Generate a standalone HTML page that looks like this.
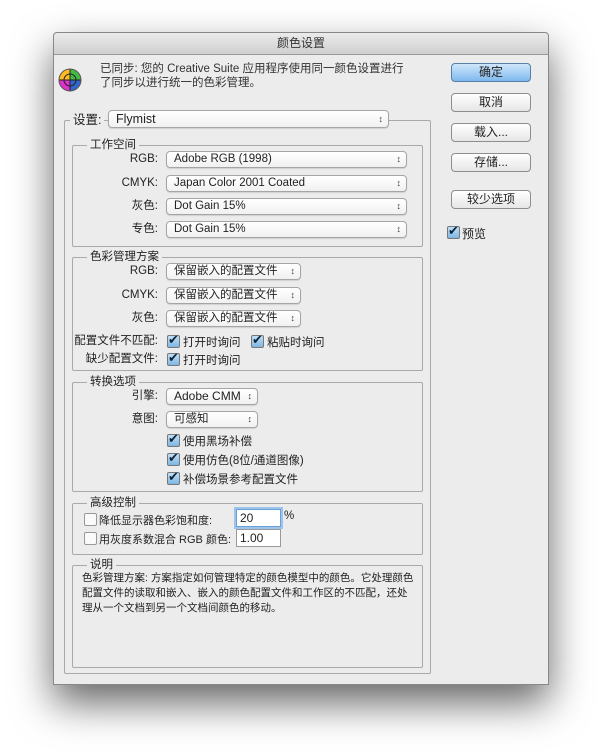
<!DOCTYPE html>
<html><head><meta charset="utf-8"><style>
body{margin:0;width:600px;height:756px;background:#fff;position:relative;overflow:hidden;font-family:"Liberation Sans","Noto Sans CJK SC",sans-serif;font-size:11.5px;color:#222}
.a{position:absolute}
.win{left:53px;top:32px;width:494px;height:651px;background:#ececec;border:1px solid #888;box-shadow:0 18px 40px rgba(0,0,0,.6);border-radius:4px 4px 0 0}
.title{left:0;top:0;width:494px;height:21px;background:linear-gradient(#ebebeb,#cfcfcf);border-bottom:1px solid #999;text-align:center;line-height:21px;font-size:12px;color:#333;border-radius:4px 4px 0 0}
.grp{border:1px solid #a9a9a9;border-radius:2px}
.gl{background:#ececec;padding:0 3px;font-size:11.5px;line-height:12px}
.pop{background:linear-gradient(#fff,#f1f1f1);border:1px solid #a5a5a5;border-radius:4px;height:15px;line-height:15px;padding-left:7px;box-sizing:content-box;font-size:11.5px;box-shadow:0 1px 1px rgba(0,0,0,.12)}
.pop:after{content:"\2195";position:absolute;right:5px;top:0;font-size:9px;color:#333}
.lbl{text-align:right;width:100px;line-height:16px}
.cb{width:11px;height:11px;border:1px solid #777;border-radius:2px;background:linear-gradient(#bfe0f7,#7eb6e3)}
.cb:after{content:"\2714";position:absolute;left:0px;top:-4px;font-size:13px;color:#123}
.cbe{width:11px;height:11px;border:1px solid #999;border-radius:2px;background:#fafafa}
.btn{width:78px;height:17px;border:1px solid #8e8e8e;border-radius:4px;background:linear-gradient(#fff,#e6e6e6);text-align:center;line-height:17px;font-size:12px}
.inp{background:#fff;border:1px solid #999;height:16px;line-height:16px;padding-left:3px;font-size:12px}
</style></head><body>
<div class="a win">
<div class="a title">颜色设置</div>
</div>
<svg class="a" style="left:57px;top:67px" width="26" height="26" viewBox="0 0 26 26">
<circle cx="13" cy="13" r="11" fill="#e33"/>
<path d="M13 13V2A11 11 0 0 1 24 13Z" fill="#4b4"/>
<path d="M13 13H24A11 11 0 0 1 13 24Z" fill="#36c"/>
<path d="M13 13V24A11 11 0 0 1 2 13Z" fill="#d3c"/>
<path d="M13 13H2A11 11 0 0 1 13 2Z" fill="#fb2"/>
<circle cx="13" cy="13" r="6" fill="none" stroke="#222" stroke-width="1"/>
<line x1="2" y1="13" x2="24" y2="13" stroke="#222"/><line x1="13" y1="2" x2="13" y2="24" stroke="#222"/>
<circle cx="13" cy="13" r="11" fill="none" stroke="#555"/>
</svg>
<div class="a" style="left:100px;top:62px;line-height:14px;font-size:11.5px;color:#333">已同步: 您的 Creative Suite 应用程序使用同一颜色设置进行<br>了同步以进行统一的色彩管理。</div>

<div class="a btn" style="left:451px;top:63px;background:linear-gradient(#cfe6fb,#7fb9ee);border-color:#5a7fa8">确定</div>
<div class="a btn" style="left:451px;top:93px">取消</div>
<div class="a btn" style="left:451px;top:123px">载入...</div>
<div class="a btn" style="left:451px;top:153px">存储...</div>
<div class="a btn" style="left:451px;top:190px">较少选项</div>
<div class="a cb" style="left:447px;top:226px"></div><div class="a" style="left:462px;top:225px;font-size:12px">预览</div>

<div class="a grp" style="left:64px;top:120px;width:365px;height:552px"></div>
<div class="a gl" style="left:70px;top:112px;font-size:12.5px;line-height:16px">设置:</div>
<div class="a pop" style="left:108px;top:110px;width:272px;height:16px;font-size:12.5px;line-height:16px">Flymist</div>

<div class="a grp" style="left:72px;top:145px;width:349px;height:100px"></div>
<div class="a gl" style="left:87px;top:139px">工作空间</div>
<div class="a lbl" style="left:58px;top:151px">RGB:</div><div class="a pop" style="left:166px;top:151px;width:232px">Adobe RGB (1998)</div>
<div class="a lbl" style="left:58px;top:175px">CMYK:</div><div class="a pop" style="left:166px;top:175px;width:232px">Japan Color 2001 Coated</div>
<div class="a lbl" style="left:58px;top:198px">灰色:</div><div class="a pop" style="left:166px;top:198px;width:232px">Dot Gain 15%</div>
<div class="a lbl" style="left:58px;top:221px">专色:</div><div class="a pop" style="left:166px;top:221px;width:232px">Dot Gain 15%</div>

<div class="a grp" style="left:72px;top:257px;width:349px;height:112px"></div>
<div class="a gl" style="left:87px;top:251px">色彩管理方案</div>
<div class="a lbl" style="left:58px;top:263px">RGB:</div><div class="a pop" style="left:166px;top:263px;width:126px">保留嵌入的配置文件</div>
<div class="a lbl" style="left:58px;top:287px">CMYK:</div><div class="a pop" style="left:166px;top:287px;width:126px">保留嵌入的配置文件</div>
<div class="a lbl" style="left:58px;top:310px">灰色:</div><div class="a pop" style="left:166px;top:310px;width:126px">保留嵌入的配置文件</div>
<div class="a lbl" style="left:58px;top:333px">配置文件不匹配:</div>
<div class="a cb" style="left:167px;top:335px"></div><div class="a" style="left:183px;top:334px">打开时询问</div>
<div class="a cb" style="left:251px;top:335px"></div><div class="a" style="left:267px;top:334px">粘贴时询问</div>
<div class="a lbl" style="left:58px;top:351px">缺少配置文件:</div>
<div class="a cb" style="left:167px;top:353px"></div><div class="a" style="left:183px;top:352px">打开时询问</div>

<div class="a grp" style="left:72px;top:382px;width:349px;height:108px"></div>
<div class="a gl" style="left:87px;top:376px">转换选项</div>
<div class="a lbl" style="left:58px;top:388px">引擎:</div><div class="a pop" style="left:166px;top:388px;width:83px;font-size:12px">Adobe CMM</div>
<div class="a lbl" style="left:58px;top:411px">意图:</div><div class="a pop" style="left:166px;top:411px;width:83px">可感知</div>
<div class="a cb" style="left:167px;top:434px"></div><div class="a" style="left:183px;top:433px">使用黑场补偿</div>
<div class="a cb" style="left:167px;top:453px"></div><div class="a" style="left:183px;top:452px">使用仿色(8位/通道图像)</div>
<div class="a cb" style="left:167px;top:472px"></div><div class="a" style="left:183px;top:471px">补偿场景参考配置文件</div>

<div class="a grp" style="left:72px;top:503px;width:349px;height:50px"></div>
<div class="a gl" style="left:87px;top:497px">高级控制</div>
<div class="a cbe" style="left:84px;top:513px"></div><div class="a" style="left:99px;top:512px;font-size:11px">降低显示器色彩饱和度:</div>
<div class="a inp" style="left:236px;top:509px;width:40px;border-color:#6a9fd8;box-shadow:0 0 0 2px #9cc4ec">20</div>
<div class="a" style="left:284px;top:510px">%</div>
<div class="a cbe" style="left:84px;top:532px"></div><div class="a" style="left:99px;top:531px;font-size:11px">用灰度系数混合 RGB 颜色:</div>
<div class="a inp" style="left:236px;top:529px;width:40px">1.00</div>

<div class="a grp" style="left:72px;top:565px;width:349px;height:101px"></div>
<div class="a gl" style="left:87px;top:559px">说明</div>
<div class="a" style="left:82px;top:571px;width:336px;line-height:15px;font-size:10.5px">色彩管理方案: 方案指定如何管理特定的颜色模型中的颜色。它处理颜色<br>配置文件的读取和嵌入、嵌入的颜色配置文件和工作区的不匹配，还处<br>理从一个文档到另一个文档间颜色的移动。</div>
</body></html>
